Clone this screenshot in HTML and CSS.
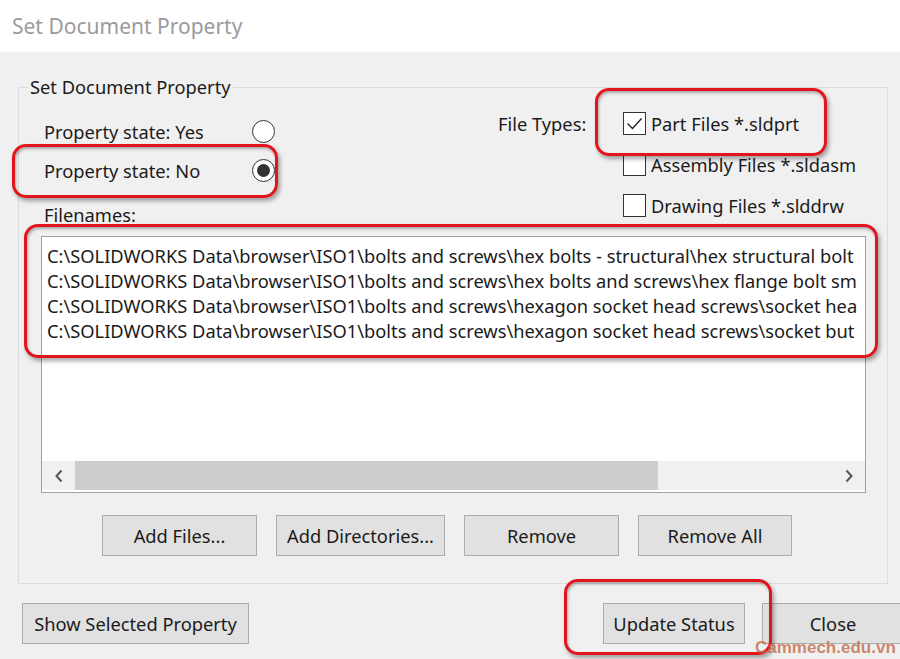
FILE: index.html
```html
<!DOCTYPE html>
<html lang="en">
<head>
  <meta charset="UTF-8">
  <title>Set Document Property</title>
  <link rel="stylesheet" href="styles.css">
</head>
<body>
  <div class="window">
    <div class="titlebar">Set Document Property</div>

    <div class="dialog">
      <fieldset class="group">
        <legend>Set Document Property</legend>

        <div class="props">
          <div class="states">
            <label class="state">
              <span>Property state: Yes</span>
              <span class="radio"></span>
            </label>
            <label class="state">
              <span>Property state: No</span>
              <span class="radio checked"></span>
            </label>
            <div class="caption">Filenames:</div>
          </div>

          <div class="types">
            <div class="types-label">File Types:</div>
            <div class="types-list">
              <label class="check">
                <span class="box">
                  <svg viewBox="0 0 23 23" width="23" height="23"><path d="M4.5 11.5 L9.5 16.5 L18.5 6.5" fill="none" stroke="#222" stroke-width="1.4"/></svg>
                </span>
                Part Files *.sldprt
              </label>
              <label class="check">
                <span class="box"></span>
                Assembly Files *.sldasm
              </label>
              <label class="check">
                <span class="box"></span>
                Drawing Files *.slddrw
              </label>
            </div>
          </div>
        </div>

        <div class="listbox">
          <div class="lines">
            <div>C:\SOLIDWORKS Data\browser\ISO1\bolts and screws\hex bolts - structural\hex structural bolt</div>
            <div>C:\SOLIDWORKS Data\browser\ISO1\bolts and screws\hex bolts and screws\hex flange bolt sm</div>
            <div>C:\SOLIDWORKS Data\browser\ISO1\bolts and screws\hexagon socket head screws\socket hea</div>
            <div>C:\SOLIDWORKS Data\browser\ISO1\bolts and screws\hexagon socket head screws\socket but</div>
          </div>
          <div class="hscroll">
            <span class="arrow">
              <svg viewBox="0 0 10 14" width="10" height="14"><path d="M7.5 1.5 L2.5 7 L7.5 12.5" fill="none" stroke="#555" stroke-width="2"/></svg>
            </span>
            <span class="track"><span class="thumb"></span></span>
            <span class="arrow">
              <svg viewBox="0 0 10 14" width="10" height="14"><path d="M2.5 1.5 L7.5 7 L2.5 12.5" fill="none" stroke="#555" stroke-width="2"/></svg>
            </span>
          </div>
        </div>

        <div class="list-actions">
          <button class="btn w-files">Add Files...</button>
          <button class="btn w-dirs">Add Directories...</button>
          <button class="btn w-remove">Remove</button>
          <button class="btn w-remove-all">Remove All</button>
        </div>
      </fieldset>

      <div class="footer">
        <button class="btn w-show">Show Selected Property</button>
        <button class="btn w-update">Update Status</button>
        <button class="btn w-close">Close</button>
      </div>
    </div>

    <!-- callouts drawn over the dialog -->
    <div class="mark mark-state"></div>
    <div class="mark mark-part"></div>
    <div class="mark mark-list"></div>
    <div class="mark mark-update"></div>

    <div class="stamp">Cammech.edu.vn</div>
  </div>
</body>
</html>
```

FILE: styles.css
```css
body {
  margin: 0;
  width: 900px;
  height: 659px;
  overflow: hidden;
  font-family: "Noto Sans", "Open Sans", sans-serif;
  font-size: 18.3px;
  color: #1b1b1b;
  background: #f0f0f0;
}
.window {
  position: relative;
  width: 900px;
  height: 659px;
  overflow: hidden;
}
.titlebar {
  height: 52px;
  line-height: 52px;
  padding-left: 12px;
  background: #fff;
  color: #9b9b9b;
  font-size: 21px;
}
.dialog {
  padding-top: 23px;
}

/* group box */
.group {
  margin: 0 0 0 18px;
  padding: 0 0 27px 0;
  width: 868px;
  border: 1px solid #dcdcdc;
  min-width: 0;
}
.group legend {
  margin-left: 9px;
  padding: 0 2px;
  line-height: 24px;
}
.props {
  display: flex;
}
.states {
  width: 231px;
  padding: 13px 0 0 25px;
}
.state {
  display: flex;
  align-items: center;
  justify-content: space-between;
  height: 39px;
}
.radio {
  width: 21px;
  height: 21px;
  border: 1px solid #333;
  border-radius: 50%;
  background: #fff;
  display: flex;
  align-items: center;
  justify-content: center;
}
.radio.checked::after {
  content: "";
  width: 13px;
  height: 13px;
  border-radius: 50%;
  background: #333;
}
.caption {
  margin-top: 13px;
  line-height: 24px;
}
.types {
  display: flex;
  margin-left: 223px;
  padding-top: 4px;
}
.types-label {
  height: 41px;
  line-height: 41px;
  width: 125px;
}
.check {
  display: flex;
  align-items: center;
  gap: 5px;
  height: 41px;
  white-space: nowrap;
}
.box {
  width: 21px;
  height: 21px;
  border: 1px solid #333;
  background: #fff;
  display: flex;
}
.box svg {
  margin: -1px;
}

/* file list */
.listbox {
  margin: 9px 0 0 22px;
  width: 823px;
  height: 255px;
  border: 1px solid #a0a0a0;
  background: #fff;
  display: flex;
  flex-direction: column;
}
.lines {
  flex: 1;
  padding: 6px 0 0 5px;
  line-height: 25px;
  white-space: nowrap;
  overflow: hidden;
}
.hscroll {
  height: 29px;
  margin-bottom: 2px;
  display: flex;
  background: #f0f0f0;
}
.arrow {
  width: 33px;
  display: flex;
  align-items: center;
  justify-content: center;
}
.track {
  flex: 1;
  display: flex;
}
.thumb {
  width: 583px;
  background: #cdcdcd;
}

/* buttons */
.btn {
  height: 41px;
  padding: 0;
  border: 1px solid #adadad;
  background: #e1e1e1;
  font-family: inherit;
  font-size: 18.3px;
  color: #1b1b1b;
  white-space: nowrap;
}
.list-actions {
  display: flex;
  gap: 19px;
  margin: 22px 0 0 83px;
}
.w-files { width: 155px; }
.w-dirs { width: 169px; }
.w-remove { width: 155px; }
.w-remove-all { width: 154px; }

.footer {
  display: flex;
  margin-top: 19px;
  padding-left: 22px;
  width: 960px;
}
.w-show { width: 227px; flex-shrink: 0; }
.w-update { width: 142px; margin-left: 354px; flex-shrink: 0; }
.w-close { width: 142px; margin-left: 17px; flex-shrink: 0; }

/* red callouts */
.mark {
  position: absolute;
  border: 3px solid #e2141c;
  border-radius: 14px;
  box-shadow: 2px 3px 4px rgba(0, 0, 0, 0.35), inset 1px 2px 3px rgba(0, 0, 0, 0.3);
}
.mark-state { left: 12px; top: 144px; width: 260px; height: 48px; }
.mark-part { left: 595px; top: 88px; width: 226px; height: 62px; }
.mark-list { left: 24px; top: 224px; width: 848px; height: 128px; }
.mark-update { left: 564px; top: 579px; width: 202px; height: 70px; }

.stamp {
  position: absolute;
  left: 755px;
  top: 638px;
  font-family: "Liberation Sans", sans-serif;
  font-weight: bold;
  font-size: 17px;
  color: rgba(196, 104, 72, 0.8);
}
```
